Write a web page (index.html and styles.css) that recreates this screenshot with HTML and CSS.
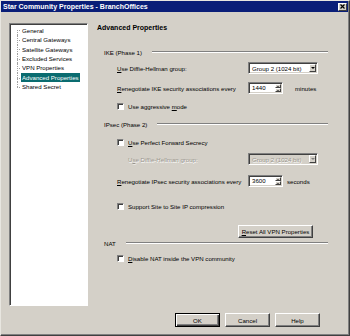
FILE: index.html
```html
<!DOCTYPE html>
<html lang="en">
<head>
    <meta charset="UTF-8">
    <title>Star Community Properties - BranchOffices</title>
    <link rel="stylesheet" href="styles.css">
</head>
<body>
    <div class="window">
        <div class="titlebar">
            <span class="title">Star Community Properties - BranchOffices</span>
            <span class="close-btn">
                <svg width="5" height="5" viewBox="0 0 5 5"><path d="M0.5 0.5 L4.5 4.5 M4.5 0.5 L0.5 4.5" stroke="#000" stroke-width="1.2"/></svg>
            </span>
        </div>
        <div class="dialog">
            <div class="main">
                <ul class="tree">
                    <li><span>General</span></li>
                    <li><span>Central Gateways</span></li>
                    <li><span>Satellite Gateways</span></li>
                    <li><span>Excluded Services</span></li>
                    <li><span>VPN Properties</span></li>
                    <li class="selected"><span>Advanced Properties</span></li>
                    <li><span>Shared Secret</span></li>
                </ul>
                <div class="page">
                    <h1 class="page-title">Advanced Properties</h1>

                    <div class="group mt14">IKE (Phase 1)</div>
                    <div class="row mt5">
                        <span class="label"><u>U</u>se Diffie-Hellman group:</span>
                        <div class="select"><span>Group 2 (1024 bit)</span><span class="arrow"></span></div>
                    </div>
                    <div class="row mt8">
                        <span class="label"><u>R</u>enegotiate IKE security associations every</span>
                        <div class="spin"><span class="value">1440</span><span class="spin-btns"><span class="up"></span><span class="down"></span></span></div>
                        <span class="unit minutes">minutes</span>
                    </div>
                    <div class="check-row mt7">
                        <span class="check"></span><span>Use aggressive <u>m</u>ode</span>
                    </div>

                    <div class="group mt8">IPsec (Phase 2)</div>
                    <div class="check-row mt8">
                        <span class="check"></span><span><u>U</u>se Perfect Forward Secrecy</span>
                    </div>
                    <div class="row mt6 disabled">
                        <span class="label indented">U<u>s</u>e Diffie-Hellman group:</span>
                        <div class="select"><span>Group 2 (1024 bit)</span><span class="arrow"></span></div>
                    </div>
                    <div class="row mt10">
                        <span class="label"><u>R</u>enegotiate IPsec security associations every</span>
                        <div class="spin"><span class="value">3600</span><span class="spin-btns"><span class="up"></span><span class="down"></span></span></div>
                        <span class="unit seconds">seconds</span>
                    </div>
                    <div class="check-row mt14">
                        <span class="check"></span><span>Support Site to Site IP compression</span>
                    </div>
                    <div class="reset-row mt14">
                        <button class="btn reset"><u>R</u>eset All VPN Properties</button>
                    </div>

                    <div class="group">NAT</div>
                    <div class="check-row mt5">
                        <span class="check"></span><span><u>D</u>isable NAT inside the VPN community</span>
                    </div>
                </div>
            </div>
            <div class="buttons">
                <button class="btn default">OK</button>
                <button class="btn">Cancel</button>
                <button class="btn">Help</button>
            </div>
        </div>
    </div>
</body>
</html>
```

FILE: styles.css
```css
body {
    margin: 0;
    background: #d4d0c8;
    font-family: "Liberation Sans", Arial, sans-serif;
    font-size: 6.1px;
    color: #000;
}
.window {
    width: 350px;
    height: 336px;
    box-sizing: border-box;
    display: flex;
    flex-direction: column;
    background: #d4d0c8;
    border: 1px solid;
    border-color: #e8e6e0 #404040 #404040 #e8e6e0;
    box-shadow: inset -1px -1px #808080;
}
.titlebar {
    height: 11px;
    margin-right: 1px;
    padding: 0 1px 0 2px;
    display: flex;
    align-items: center;
    justify-content: space-between;
    background: #0a1e78;
    color: #fff;
    font-weight: bold;
    font-size: 7px;
}
.close-btn {
    width: 9px;
    height: 8px;
    box-sizing: border-box;
    display: flex;
    align-items: center;
    justify-content: center;
    background: #d4d0c8;
    border: 1px solid;
    border-color: #fff #404040 #404040 #fff;
}
.close-btn svg {
    display: block;
}
.dialog {
    flex: 1;
    display: flex;
    flex-direction: column;
    padding: 11px 0 0 8px;
}
.main {
    display: flex;
    height: 283px;
}

/* tree */
.tree {
    width: 79px;
    box-sizing: border-box;
    margin: 0;
    padding: 1.6px 0 0 7px;
    list-style: none;
    background: #fff;
    border: 1px solid;
    border-color: #808080 #fff #fff #808080;
    box-shadow: inset 1px 1px #404040;
    line-height: 9.45px;
}
.tree li {
    position: relative;
    padding-left: 4px;
    white-space: nowrap;
}
.tree li::before {
    content: "";
    position: absolute;
    left: 0;
    top: 50%;
    width: 3px;
    border-top: 1px dotted #a0a0a0;
}
.tree li::after {
    content: "";
    position: absolute;
    left: 0;
    top: 0;
    bottom: 0;
    border-left: 1px dotted #a0a0a0;
}
.tree li:first-child::after {
    top: 50%;
}
.tree li:last-child::after {
    bottom: 50%;
}
.tree li span {
    display: inline-block;
    padding: 0 1px;
    height: 9px;
    line-height: 9px;
    vertical-align: top;
}
.tree li.selected span {
    background: #0a6c70;
    color: #fff;
}

/* property page */
.page {
    flex: 1;
    margin: 0 21px 0 9px;
}
.page-title {
    margin: 0;
    height: 10px;
    line-height: 10px;
    font-size: 7px;
    font-weight: bold;
}
.mt5 { margin-top: 5px; }
.mt6 { margin-top: 6px; }
.mt7 { margin-top: 7px; }
.mt8 { margin-top: 8px; }
.mt10 { margin-top: 10px; }
.mt14 { margin-top: 14px; }

.group {
    height: 10px;
    padding-left: 7px;
    display: flex;
    align-items: center;
    white-space: nowrap;
}
.group::after {
    content: "";
    flex: 1;
    margin-left: 10px;
    border-top: 1px solid #808080;
    border-bottom: 1px solid #fff;
}
.row {
    height: 12px;
    padding-left: 20px;
    display: flex;
    align-items: center;
    white-space: nowrap;
}
.label {
    width: 131px;
    box-sizing: border-box;
}
.label.indented {
    padding-left: 11px;
}
.disabled .label,
.disabled .select {
    color: #9a968e;
    text-shadow: 0.5px 0.5px #fff;
}
.select {
    width: 70px;
    height: 12px;
    box-sizing: border-box;
    display: flex;
    align-items: center;
    padding: 1px 1px 1px 3px;
    background: #fff;
    border: 1px solid;
    border-color: #808080 #fff #fff #808080;
    box-shadow: inset 1px 1px #404040, inset -1px -1px #d4d0c8;
}
.disabled .select {
    background: #d4d0c8;
}
.select .arrow {
    margin-left: auto;
    width: 7px;
    height: 8px;
    box-sizing: border-box;
    display: flex;
    align-items: center;
    justify-content: center;
    background: #d4d0c8;
    border: 1px solid;
    border-color: #fff #404040 #404040 #fff;
}
.select .arrow::after {
    content: "";
    border-left: 2px solid transparent;
    border-right: 2px solid transparent;
    border-top: 2px solid #000;
}
.disabled .select .arrow::after {
    border-top-color: #808080;
}
.spin {
    width: 35px;
    height: 12px;
    box-sizing: border-box;
    display: flex;
    padding: 1px;
    background: #fff;
    border: 1px solid;
    border-color: #808080 #fff #fff #808080;
    box-shadow: inset 1px 1px #404040, inset -1px -1px #d4d0c8;
}
.spin .value {
    flex: 1;
    padding-left: 2px;
    line-height: 8px;
}
.spin-btns {
    width: 6px;
    display: flex;
    flex-direction: column;
}
.spin-btns span {
    flex: 1;
    box-sizing: border-box;
    display: flex;
    align-items: center;
    justify-content: center;
    background: #d4d0c8;
    border: 1px solid;
    border-color: #fff #404040 #404040 #fff;
}
.spin-btns .up::after {
    content: "";
    border-left: 1.5px solid transparent;
    border-right: 1.5px solid transparent;
    border-bottom: 1.5px solid #000;
}
.spin-btns .down::after {
    content: "";
    border-left: 1.5px solid transparent;
    border-right: 1.5px solid transparent;
    border-top: 1.5px solid #000;
}
.unit.minutes {
    margin-left: 12px;
}
.unit.seconds {
    margin-left: 4px;
}
.check-row {
    height: 10px;
    padding-left: 20px;
    display: flex;
    align-items: center;
    white-space: nowrap;
}
.check {
    width: 7px;
    height: 7px;
    box-sizing: border-box;
    margin-right: 4px;
    background: #fff;
    border: 1px solid;
    border-color: #808080 #fff #fff #808080;
    box-shadow: inset 1px 1px #404040;
}
.reset-row {
    height: 13px;
    display: flex;
    justify-content: flex-end;
    padding-right: 15px;
}

/* buttons */
.btn {
    box-sizing: border-box;
    padding: 0;
    font: inherit;
    color: #000;
    background: #d4d0c8;
    border: 1px solid;
    border-color: #fff #404040 #404040 #fff;
    box-shadow: inset -1px -1px #808080;
}
.btn.reset {
    width: 75px;
    height: 13px;
}
.buttons {
    display: flex;
    justify-content: flex-end;
    gap: 5px;
    margin: 7px 29px 0 0;
}
.buttons .btn {
    width: 45px;
    height: 14px;
}
.btn.default {
    border-color: #000;
    box-shadow: inset 1px 1px #fff, inset -1px -1px #404040, inset -2px -2px #808080;
}
```
